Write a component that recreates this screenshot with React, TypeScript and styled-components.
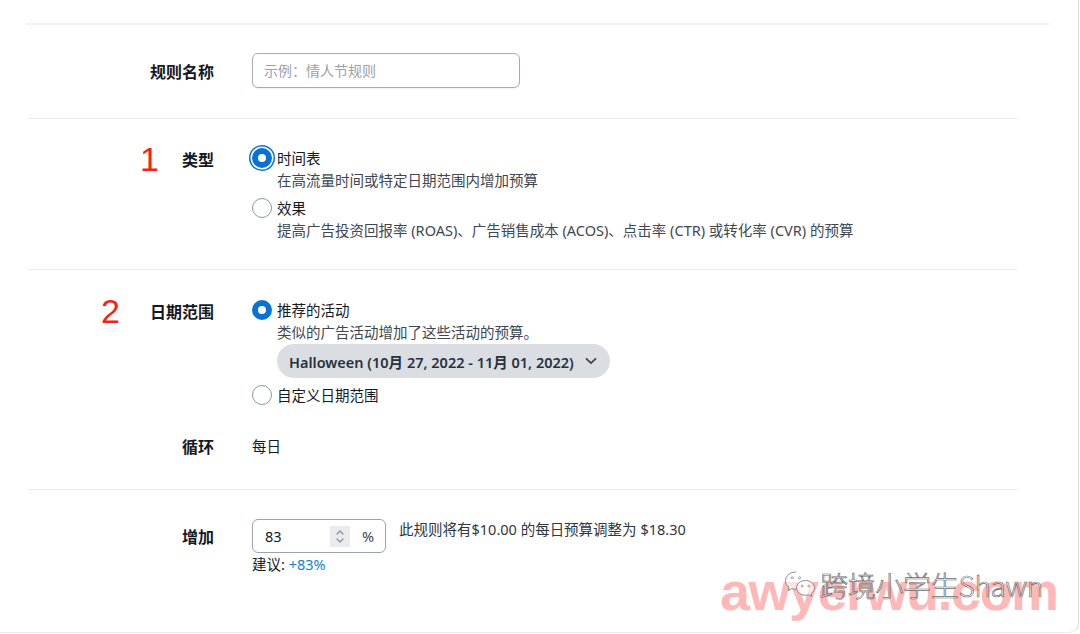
import React from 'react';
import styled, { createGlobalStyle } from 'styled-components';

const Global = createGlobalStyle`
  html, body { margin: 0; padding: 0; background: #fff; }
  body {
    font-family: "Noto Sans", "Noto Sans CJK SC", sans-serif;
    color: #16191f;
    -webkit-font-smoothing: antialiased;
  }
  #root { width: 1080px; height: 634px; overflow: hidden; }
  * { box-sizing: border-box; }
`;

const Card = styled.div`
  position: relative;
  width: 1079px;
  height: 633px;
  background: #fff;
  border-right: 1px solid #dcdde0;
  border-bottom: 1px solid #ececee;
  border-bottom-right-radius: 10px;
  overflow: hidden;
`;

const HeaderRule = styled.div`
  margin: 23px 0 0 26px;
  width: 1023px;
  height: 2px;
  background: #f1f2f3;
`;

const Form = styled.div`
  margin-left: 28px;
  width: 989px;
`;

const Section = styled.section<{ $pt: number; $pb: number; $last?: boolean }>`
  padding: ${(p) => p.$pt}px 0 ${(p) => p.$pb}px;
  border-bottom: ${(p) => (p.$last ? 'none' : '1px solid #e9ebed')};
  display: flex;
  flex-direction: column;
  gap: 29px;
`;

const Row = styled.div`
  display: grid;
  grid-template-columns: 186px 1fr;
  column-gap: 38px;
  align-items: start;
`;

const Label = styled.div<{ $h: number; $gap?: number }>`
  display: flex;
  justify-content: flex-end;
  align-items: center;
  gap: ${(p) => p.$gap ?? 0}px;
  height: ${(p) => p.$h}px;
  font-size: 16px;
  font-weight: 700;
  color: #16191f;
  white-space: nowrap;
`;

const Marker = styled.span`
  font-family: "Liberation Sans", Arial, sans-serif;
  font-size: 34px;
  font-weight: 400;
  color: #f2231c;
  line-height: 1;
`;

const TextInput = styled.input`
  width: 268px;
  height: 35px;
  border: 1px solid #a3acb9;
  border-radius: 6px;
  padding: 0 11px;
  font-family: "Noto Sans", "Noto Sans CJK SC", sans-serif;
  font-size: 14px;
  color: #16191f;
  outline: none;
  box-shadow: 0 1px 1px rgba(0, 0, 0, 0.05);
  &::placeholder { color: #9aa1aa; }
`;

const Options = styled.div`
  display: flex;
  flex-direction: column;
  gap: 6px;
`;

const Option = styled.div`
  display: grid;
  grid-template-columns: 20px 1fr;
  column-gap: 5px;
  align-items: start;
`;

const Radio = styled.span<{ $checked?: boolean; $focus?: boolean }>`
  width: 20px;
  height: 20px;
  margin-top: 1px;
  border-radius: 50%;
  background: #fff;
  border: ${(p) => (p.$checked ? '6px solid #0972d3' : '1.5px solid #8d96a3')};
  box-shadow: ${(p) => (p.$focus ? '0 0 0 1.5px #fff, 0 0 0 3px #0972d3' : 'none')};
`;

const OptionBody = styled.div`
  display: flex;
  flex-direction: column;
  align-items: flex-start;
`;

const OptionTitle = styled.div`
  font-size: 14.5px;
  line-height: 22px;
  color: #16191f;
`;

const OptionDesc = styled.div`
  font-size: 14.5px;
  line-height: 22px;
  color: #414750;
  white-space: nowrap;
`;

const Pill = styled.button`
  margin-top: 1px;
  height: 34px;
  border: none;
  border-radius: 17px;
  background: #dadee3;
  padding: 0 13px 0 12px;
  display: flex;
  align-items: center;
  gap: 11px;
  font-family: "Noto Sans", "Noto Sans CJK SC", sans-serif;
  font-size: 14.5px;
  font-weight: 600;
  color: #28313c;
  white-space: nowrap;
`;

const Value = styled.div`
  font-size: 14.5px;
  line-height: 22px;
  color: #16191f;
`;

const IncreaseWrap = styled.div`
  display: flex;
  flex-direction: column;
  gap: 2px;
`;

const IncreaseLine = styled.div`
  display: flex;
  align-items: flex-start;
  gap: 13px;
`;

const NumberBox = styled.div`
  width: 134px;
  height: 34px;
  border: 1px solid #9aa4b1;
  border-radius: 6px;
  display: flex;
  align-items: center;
  padding-left: 12px;
  font-size: 14.5px;
  color: #16191f;
`;

const NumberValue = styled.span`
  width: 65px;
`;

const Spinner = styled.span`
  width: 20px;
  height: 21px;
  background: #e9ebee;
  display: flex;
  align-items: center;
  justify-content: center;
`;

const Unit = styled.span`
  margin-left: 12px;
  color: #414750;
`;

const Note = styled.div`
  font-size: 14.5px;
  line-height: 22px;
  color: #2f3640;
  margin-top: -1px;
  white-space: nowrap;
`;

const Suggest = styled.div`
  font-size: 14.5px;
  line-height: 18px;
  color: #16191f;
`;

const Accent = styled.span`
  color: #1480d6;
`;

const Watermark = styled.div`
  position: absolute;
  left: 718px;
  top: 560px;
  width: 360px;
  height: 70px;
  pointer-events: none;
`;

const Site = styled.div`
  position: absolute;
  left: 2px;
  top: 4px;
  font-family: "Liberation Sans", Arial, sans-serif;
  font-size: 54px;
  font-weight: 700;
  letter-spacing: -1.5px;
  line-height: 1;
  color: rgba(255, 125, 125, 0.55);
`;

const Brand = styled.div`
  position: absolute;
  left: 66px;
  top: 8px;
  display: flex;
  align-items: center;
  gap: 4px;
`;

const BrandText = styled.span`
  font-family: "Noto Sans CJK SC", "Noto Sans", sans-serif;
  font-size: 28px;
  font-weight: 300;
  line-height: 34px;
  color: rgba(255, 255, 255, 0.5);
  -webkit-text-stroke: 0.7px #6d6d6d;
  letter-spacing: -0.3px;
`;

const Chevron = () => (
  <svg width="12" height="8" viewBox="0 0 12 8" fill="none">
    <path d="M1.5 1.8 6 6.2l4.5-4.4" stroke="#3d4550" strokeWidth="1.8" strokeLinecap="round" strokeLinejoin="round" />
  </svg>
);

const SpinIcon = () => (
  <svg width="10" height="17" viewBox="0 0 10 17" fill="none">
    <path d="M2 6 5 3l3 3" stroke="#8a9099" strokeWidth="1.2" strokeLinecap="round" strokeLinejoin="round" />
    <path d="M2 11l3 3 3-3" stroke="#8a9099" strokeWidth="1.2" strokeLinecap="round" strokeLinejoin="round" />
  </svg>
);

const WeChat = () => (
  <svg width="32" height="30" viewBox="0 0 32 30" fill="none">
    <path
      d="M12 2C6 2 1.5 5.9 1.5 10.7c0 2.7 1.4 5 3.6 6.6L4.2 20.6l3.7-2c1.2.4 2.6.6 4.1.6.4 0 .8 0 1.2-.1"
      stroke="#8a8a8a" strokeWidth="1" fill="rgba(255,255,255,0.6)" strokeLinejoin="round"
    />
    <path
      d="M21.5 10.5c-5 0-9 3.3-9 7.4s4 7.4 9 7.4c1.1 0 2.1-.2 3.1-.5l3.2 1.7-.8-2.8c2-1.4 3.5-3.5 3.5-5.8 0-4.1-4-7.4-9-7.4z"
      stroke="#8a8a8a" strokeWidth="1" fill="rgba(255,255,255,0.6)" strokeLinejoin="round"
    />
    <circle cx="8.3" cy="7.8" r="1.1" stroke="#8a8a8a" strokeWidth="0.8" />
    <circle cx="15.5" cy="7.8" r="1.1" stroke="#8a8a8a" strokeWidth="0.8" />
    <circle cx="18.2" cy="16" r="1" stroke="#8a8a8a" strokeWidth="0.8" />
    <circle cx="24.8" cy="16" r="1" stroke="#8a8a8a" strokeWidth="0.8" />
  </svg>
);

export default function App() {
  return (
    <>
      <Global />
      <Card>
        <HeaderRule />
        <Form>
          <Section $pt={28} $pb={30}>
            <Row>
              <Label $h={35}>规则名称</Label>
              <TextInput placeholder="示例：情人节规则" />
            </Row>
          </Section>

          <Section $pt={28} $pb={28}>
            <Row>
              <Label $h={24} $gap={23}>
                <Marker>1</Marker>
                <span>类型</span>
              </Label>
              <Options>
                <Option>
                  <Radio $checked $focus />
                  <OptionBody>
                    <OptionTitle>时间表</OptionTitle>
                    <OptionDesc>在高流量时间或特定日期范围内增加预算</OptionDesc>
                  </OptionBody>
                </Option>
                <Option>
                  <Radio />
                  <OptionBody>
                    <OptionTitle>效果</OptionTitle>
                    <OptionDesc>
                      提高广告投资回报率 (ROAS)、广告销售成本 (ACOS)、点击率 (CTR) 或转化率 (CVR) 的预算
                    </OptionDesc>
                  </OptionBody>
                </Option>
              </Options>
            </Row>
          </Section>

          <Section $pt={29} $pb={32}>
            <Row>
              <Label $h={24} $gap={30}>
                <Marker>2</Marker>
                <span>日期范围</span>
              </Label>
              <Options>
                <Option>
                  <Radio $checked />
                  <OptionBody>
                    <OptionTitle>推荐的活动</OptionTitle>
                    <OptionDesc>类似的广告活动增加了这些活动的预算。</OptionDesc>
                    <Pill>
                      <span>Halloween (10月 27, 2022 - 11月 01, 2022)</span>
                      <Chevron />
                    </Pill>
                  </OptionBody>
                </Option>
                <Option>
                  <Radio />
                  <OptionBody>
                    <OptionTitle>自定义日期范围</OptionTitle>
                  </OptionBody>
                </Option>
              </Options>
            </Row>
            <Row>
              <Label $h={22}>循环</Label>
              <Value>每日</Value>
            </Row>
          </Section>

          <Section $pt={29} $pb={20} $last>
            <Row>
              <Label $h={34}>增加</Label>
              <IncreaseWrap>
                <IncreaseLine>
                  <NumberBox>
                    <NumberValue>83</NumberValue>
                    <Spinner>
                      <SpinIcon />
                    </Spinner>
                    <Unit>%</Unit>
                  </NumberBox>
                  <Note>此规则将有$10.00 的每日预算调整为 $18.30</Note>
                </IncreaseLine>
                <Suggest>
                  建议: <Accent>+83%</Accent>
                </Suggest>
              </IncreaseWrap>
            </Row>
          </Section>
        </Form>

        <Watermark>
          <Site>awyerwu.com</Site>
          <Brand>
            <WeChat />
            <BrandText>跨境小学生Shawn</BrandText>
          </Brand>
        </Watermark>
      </Card>
    </>
  );
}
